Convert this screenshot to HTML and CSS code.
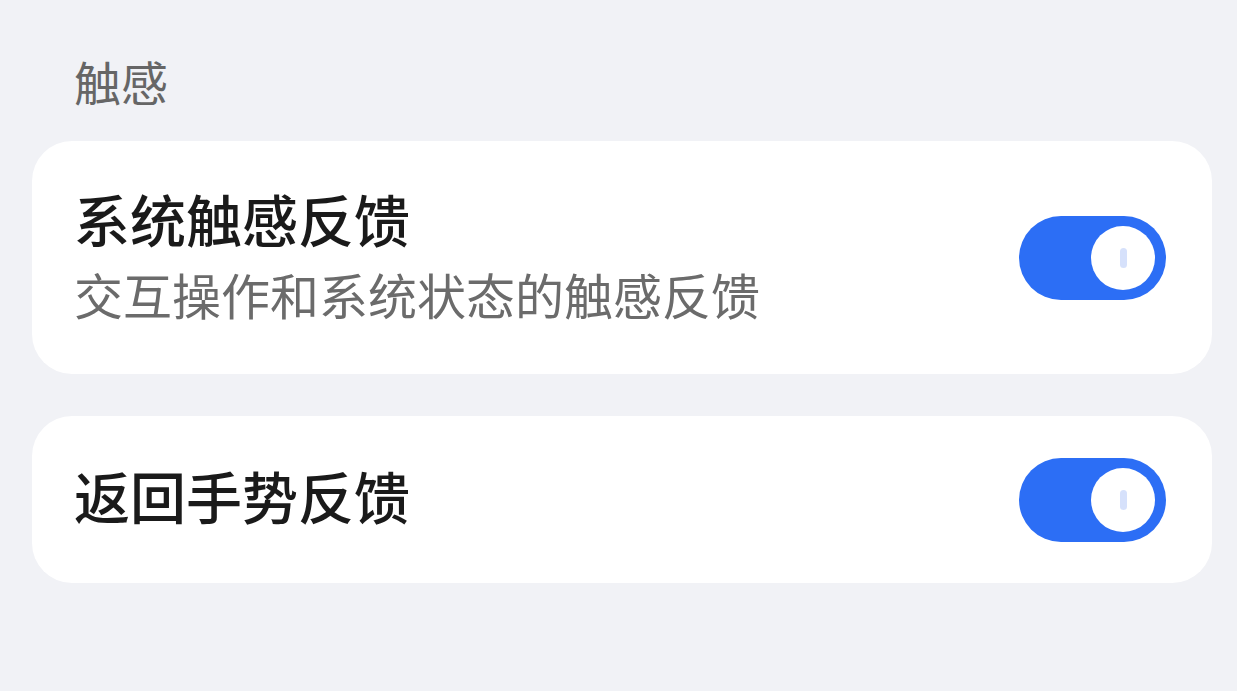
FILE: index.html
```html
<!DOCTYPE html>
<html lang="zh-CN">
<head>
  <meta charset="UTF-8">
  <meta name="viewport" content="width=device-width, initial-scale=1.0">
  <title>触感</title>
  <link rel="stylesheet" href="styles.css">
</head>
<body>
  <div class="page">
    <h2 class="section-title">触感</h2>

    <div class="card card-tall">
      <div class="item-text">
        <p class="item-title">系统触感反馈</p>
        <p class="item-desc">交互操作和系统状态的触感反馈</p>
      </div>
      <div class="switch on"><span class="knob"><span class="mark"></span></span></div>
    </div>

    <div class="card">
      <div class="item-text single">
        <p class="item-title">返回手势反馈</p>
      </div>
      <div class="switch on"><span class="knob"><span class="mark"></span></span></div>
    </div>
  </div>
</body>
</html>
```

FILE: styles.css
```css
body {
    margin: 0;
    background-color: #f1f2f6;
    font-family: "Noto Sans CJK SC", "Noto Sans", sans-serif;
  }

  .page {
    padding: 0 25px 0 32px;
  }

  .section-title {
    margin: 0 0 33px;
    padding: 54px 0 0 42px;
    font-size: 47px;
    line-height: 54px;
    font-weight: 400;
    color: #666666;
  }

  .card {
    display: flex;
    align-items: center;
    justify-content: space-between;
    height: 167px;
    margin-bottom: 42px;
    padding: 0 46px 0 42px;
    background-color: #ffffff;
    border-radius: 40px;
  }

  .card-tall {
    height: 233px;
  }

  .item-text {
    padding-bottom: 6px;
  }

  .item-text.single {
    padding-bottom: 10px;
  }

  .item-text p {
    margin: 0;
  }

  .item-title {
    font-size: 56px;
    line-height: 70px;
    font-weight: 500;
    color: #1a1a1a;
  }

  .item-desc {
    margin-top: 8px !important;
    font-size: 49px;
    line-height: 66px;
    color: #6b6b6b;
  }

  .switch {
    width: 147px;
    height: 84px;
    border-radius: 42px;
    background-color: #2c6ef5;
    display: flex;
    align-items: center;
    justify-content: flex-end;
    padding-right: 11px;
    box-sizing: border-box;
  }

  .knob {
    width: 64px;
    height: 64px;
    border-radius: 50%;
    background-color: #ffffff;
    display: flex;
    align-items: center;
    justify-content: center;
  }

  .mark {
    width: 7px;
    height: 20px;
    border-radius: 4px;
    background-color: #d6e1fb;
  }
```
